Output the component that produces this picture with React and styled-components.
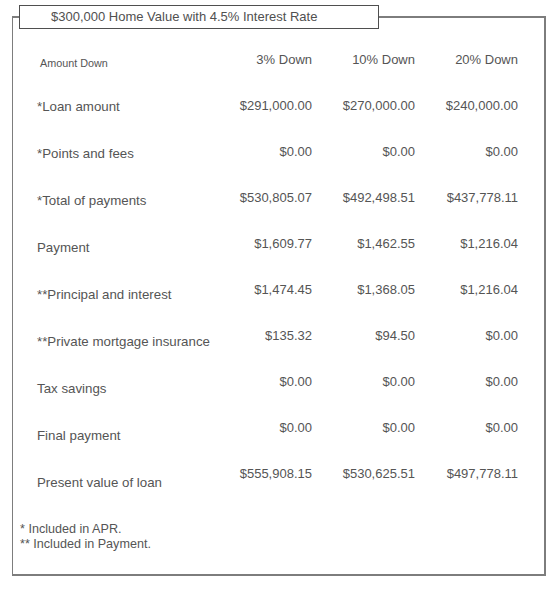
import React from "react";
import styled, { createGlobalStyle } from "styled-components";

const Global = createGlobalStyle`
  html, body { margin: 0; padding: 0; background: #fff; }
  body { font-family: "Liberation Sans", Arial, sans-serif; color: #555; }
`;

const Page = styled.div`
  padding: 5px 0 0 12px;
`;

const Frame = styled.fieldset`
  box-sizing: border-box;
  width: 534px;
  margin: 0;
  padding: 23px 0 22px 7px;
  border: 2px solid #7d7d7d;
  border-left-width: 1px;
  min-inline-size: 0;
`;

const Caption = styled.legend`
  box-sizing: border-box;
  width: 360px;
  height: 24px;
  margin-left: -1px;
  padding: 0 0 0 31px;
  border: 1px solid #4f4f4f;
  font-size: 13px;
  line-height: 22px;
  color: #505050;
  white-space: nowrap;
`;

const Table = styled.div`
  display: flex;
  margin-left: 17px;
`;

const LabelColumn = styled.div`
  display: flex;
  flex-direction: column;
  width: 172px;
`;

const HeadLabel = styled.div`
  height: 47px;
  padding: 4px 0 0 3px;
  box-sizing: border-box;
  font-size: 10.8px;
  line-height: 14px;
`;

const Label = styled.div`
  height: 47px;
  font-size: 13.3px;
  line-height: 16px;
  white-space: nowrap;
`;

const ValueGrid = styled.div`
  display: grid;
  grid-template-columns: repeat(3, 103px);
  grid-auto-rows: 46px;
  align-content: start;
`;

const Value = styled.div`
  text-align: right;
  font-size: 13px;
  line-height: 16px;
  white-space: nowrap;
`;

const Notes = styled.div`
  font-size: 12.6px;
  line-height: 15px;
`;

const headers = ["3% Down", "10% Down", "20% Down"];

const rows = [
  ["*Loan amount", "$291,000.00", "$270,000.00", "$240,000.00"],
  ["*Points and fees", "$0.00", "$0.00", "$0.00"],
  ["*Total of payments", "$530,805.07", "$492,498.51", "$437,778.11"],
  ["Payment", "$1,609.77", "$1,462.55", "$1,216.04"],
  ["**Principal and interest", "$1,474.45", "$1,368.05", "$1,216.04"],
  ["**Private mortgage insurance", "$135.32", "$94.50", "$0.00"],
  ["Tax savings", "$0.00", "$0.00", "$0.00"],
  ["Final payment", "$0.00", "$0.00", "$0.00"],
  ["Present value of loan", "$555,908.15", "$530,625.51", "$497,778.11"],
];

export default function App() {
  return (
    <>
      <Global />
      <Page>
        <Frame>
          <Caption>$300,000 Home Value with 4.5% Interest Rate</Caption>
          <Table>
            <LabelColumn>
              <HeadLabel>Amount Down</HeadLabel>
              {rows.map((r) => (
                <Label key={r[0]}>{r[0]}</Label>
              ))}
            </LabelColumn>
            <ValueGrid>
              {headers.map((h) => (
                <Value key={h}>{h}</Value>
              ))}
              {rows.map((r) =>
                r.slice(1).map((v, i) => <Value key={r[0] + i}>{v}</Value>)
              )}
            </ValueGrid>
          </Table>
          <Notes>
            * Included in APR.
            <br />
            ** Included in Payment.
          </Notes>
        </Frame>
      </Page>
    </>
  );
}
